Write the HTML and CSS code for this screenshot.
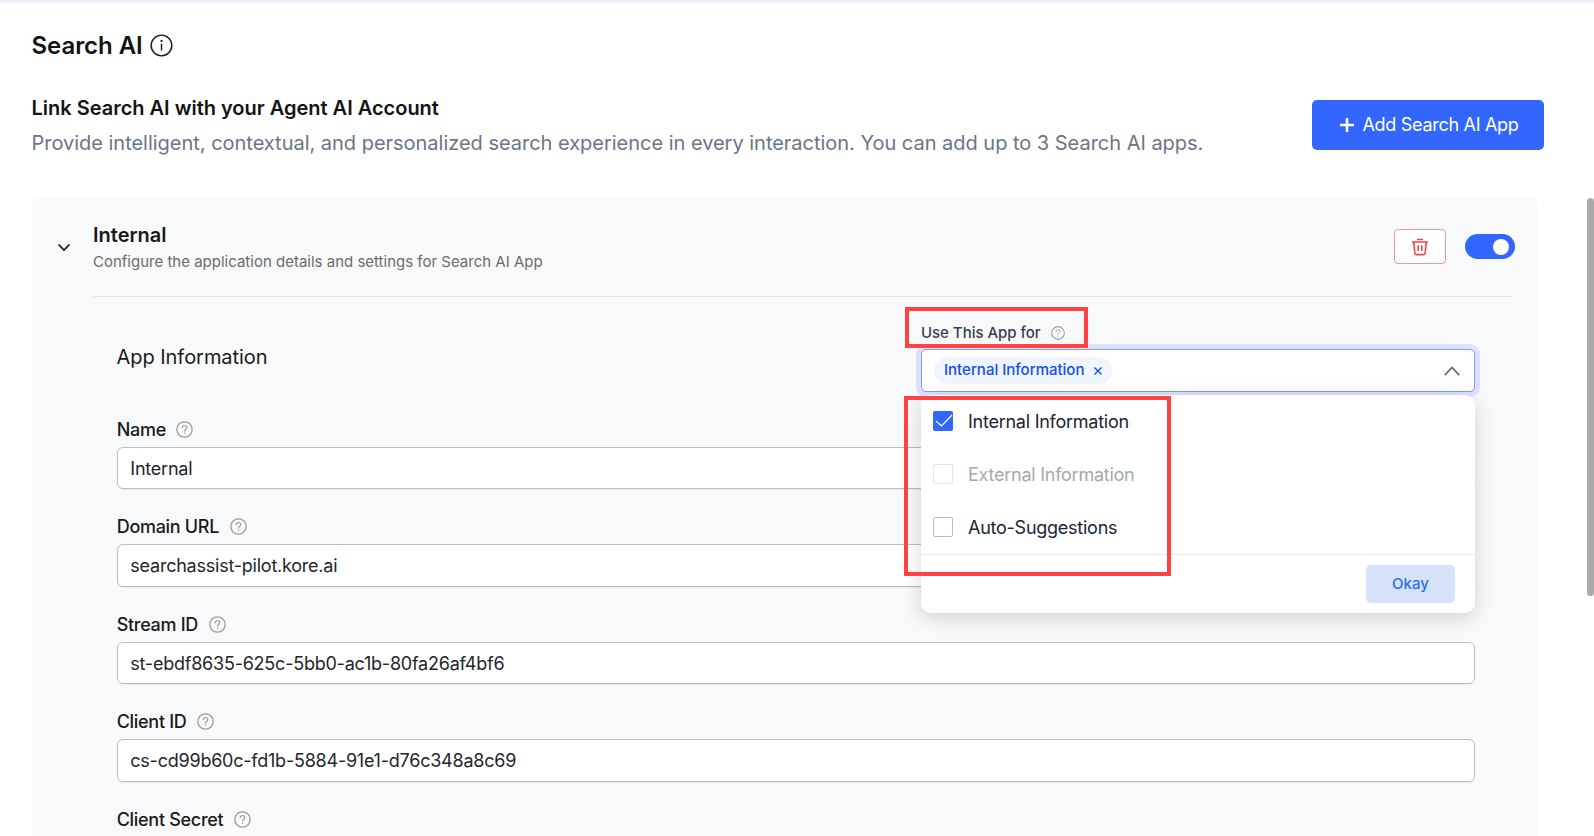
FILE: index.html
```html
<!DOCTYPE html>
<html lang="en">
<head>
<meta charset="utf-8">
<title>Search AI</title>
<link rel="stylesheet" href="styles.css">
</head>
<body>
<svg width="0" height="0" class="defs">
  <symbol id="help" viewBox="0 0 17 17">
    <circle cx="8.5" cy="8.5" r="7.7" fill="none" stroke="#9c9c9c" stroke-width="1.3"/>
    <path d="M6.2 6.7c0-1.3 1-2.2 2.3-2.2s2.3.9 2.3 2.1c0 1.6-2.2 1.7-2.2 3.4" fill="none" stroke="#9c9c9c" stroke-width="1.2" stroke-linecap="round"/>
    <circle cx="8.55" cy="12.2" r=".8" fill="#9c9c9c"/>
  </symbol>
</svg>
<div class="page">
  <h1 class="title"><span>Search AI</span>
    <svg class="info" viewBox="0 0 24 24"><circle cx="12" cy="12" r="10.8" fill="none" stroke="#1a1a1a" stroke-width="1.5"/><path d="M12 10.2v7" stroke="#1a1a1a" stroke-width="1.5"/><circle cx="12" cy="7.2" r="1.1" fill="#1a1a1a"/></svg>
  </h1>
  <header class="intro">
    <div class="intro-text">
      <h2 class="subtitle"><span>Link Search AI with your Agent AI Account</span></h2>
      <p class="lead"><span>Provide intelligent, contextual, and personalized search experience in every interaction. You can add up to 3 Search AI apps.</span></p>
    </div>
    <button class="add"><svg width="14" height="14" viewBox="0 0 14 14"><path d="M7 1v12M1 7h12" stroke="#fff" stroke-width="2.600" stroke-linecap="round"/></svg><span>Add Search AI App</span></button>
  </header>
  <main class="card">
    <div class="card-head">
      <svg class="toggle-arrow" width="14" height="9" viewBox="0 0 14 9"><path d="M1.5 1.5 7 7l5.500-5.500" fill="none" stroke="#16181d" stroke-width="1.7"/></svg>
      <div class="card-bar">
        <div class="card-names">
          <h3 class="card-title"><span>Internal</span></h3>
          <p class="card-desc"><span>Configure the application details and settings for Search AI App</span></p>
        </div>
        <button class="trash" aria-label="Delete"><svg width="18" height="18" viewBox="0 0 18 18" fill="none" stroke="#ef4444" stroke-width="1.600"><path d="M1 4h16M6 1.500h6M2.800 4l1 11c.1 1 .7 1.600 1.700 1.600h7c1 0 1.600-.6 1.700-1.600l1-11M7.200 7.300v5.700M10.800 7.300v5.700"/></svg></button>
        <span class="switch"><span class="knob"></span></span>
      </div>
    </div>
    <section class="form">
      <div class="form-top">
        <h4 class="section-title"><span>App Information</span></h4>
        <div class="use">
          <div class="use-label"><span>Use This App for</span><svg width="14" height="14"><use href="#help"/></svg></div>
          <div class="select">
            <span class="chip"><span>Internal Information</span><svg width="8" height="8" viewBox="0 0 8 8"><path d="M.5.500l7 7M7.500.500l-7 7" stroke="#0f4fea" stroke-width="1.400"/></svg></span>
            <svg class="caret" width="16" height="10" viewBox="0 0 16 10"><path d="M.8 9.200 8 1.500l7.200 7.700" fill="none" stroke="#5d6675" stroke-width="1.700"/></svg>
          </div>
          <div class="menu">
            <div class="option"><span class="box checked"><svg width="20" height="20" viewBox="0 0 20 20"><path d="M3 10l5.500 5L19 4" fill="none" stroke="#fff" stroke-width="1.200"/></svg></span><span>Internal Information</span></div>
            <div class="option disabled"><span class="box"></span><span>External Information</span></div>
            <div class="option"><span class="box"></span><span>Auto-Suggestions</span></div>
            <div class="menu-foot"><button class="okay"><span>Okay</span></button></div>
          </div>
          <div class="mark mark-label"></div>
          <div class="mark mark-menu"></div>
        </div>
      </div>
      <div class="field"><div class="label"><span>Name</span><svg width="17" height="17"><use href="#help"/></svg></div><div class="input"><span>Internal</span></div></div>
      <div class="field"><div class="label"><span>Domain URL</span><svg width="17" height="17"><use href="#help"/></svg></div><div class="input"><span>searchassist-pilot.kore.ai</span></div></div>
      <div class="field"><div class="label"><span>Stream ID</span><svg width="17" height="17"><use href="#help"/></svg></div><div class="input"><span>st-ebdf8635-625c-5bb0-ac1b-80fa26af4bf6</span></div></div>
      <div class="field"><div class="label"><span>Client ID</span><svg width="17" height="17"><use href="#help"/></svg></div><div class="input"><span>cs-cd99b60c-fd1b-5884-91e1-d76c348a8c69</span></div></div>
      <div class="field"><div class="label"><span>Client Secret</span><svg width="17" height="17"><use href="#help"/></svg></div><div class="input"></div></div>
    </section>
  </main>
</div>
<div class="scrollbar"></div>
</body>
</html>
```
FILE: styles.css
```css
* { box-sizing: border-box; margin: 0; }
body { font-family: Inter, "Liberation Sans", sans-serif; color: #1a1a1a; background: #fff; height: 836px; overflow: hidden; }
button { font: inherit; border: 0; padding: 0; }
svg { display: block; flex: none; }
.defs { position: absolute; }
.page { height: 836px; overflow: hidden; padding: 30px 50px 0 32px; background: linear-gradient(#e4edf4, #fff 5px); }
.title { display: flex; align-items: center; gap: 7px; height: 30px; font-size: 24px; font-weight: 600; line-height: 30px; letter-spacing: -.05px; color: #141414; }
.title span { margin: 2px 0 0 -.5px; }
.info { width: 23px; height: 23px; }
.intro { display: flex; justify-content: space-between; margin-top: 35px; height: 103px; }
.intro-text { margin-left: -.5px; }
.subtitle { font-size: 20px; line-height: 26px; font-weight: 600; letter-spacing: -.01px; color: #141414; }
.lead { font-size: 20px; line-height: 26px; margin-top: 9px; color: #6b7588; white-space: nowrap; letter-spacing: -.02px; }
.add { display: flex; align-items: center; justify-content: center; gap: 9px; width: 232px; height: 50px; margin-top: 5px; padding: 0 0 2px 2px; border-radius: 5px; background: #3366ff; color: #fff; font-size: 18px; letter-spacing: -.3px; }
.add svg { margin-top: 1px; }
.card { width: 1505px; height: 700px; border-radius: 5px; background: #f8f9fb; padding: 0 25px; }
.card-head { display: flex; align-items: center; gap: 22px; height: 99px; }
.toggle-arrow { margin-bottom: 1px; }
.card-bar { display: flex; align-items: center; flex: 1; height: 99px; border-bottom: 1px solid #e4e5e7; }
.card-names { flex: 1; padding-bottom: 1px; }
.card-title { font-size: 20px; line-height: 26px; font-weight: 600; }
.card-desc { font-size: 15px; line-height: 20px; margin-top: 4px; color: #6c6c6c; }
.trash { display: grid; place-items: center; width: 52px; height: 35px; padding-top: 1px; border: 1px solid #fb9494; border-radius: 4px; background: #fff; margin: 0 19px 2px 0; }
.switch { display: flex; align-items: center; justify-content: flex-end; width: 50px; height: 25px; border-radius: 13px; background: #3366ff; padding: 1px 6px 0 0; margin: 0 -3px 1.500px 0; }
.knob { width: 16px; height: 16px; border-radius: 50%; background: #fff; }
.form { padding: 0 37px 0 60px; }
.form-top { display: flex; justify-content: space-between; height: 118px; }
.section-title { font-size: 20px; line-height: 26px; font-weight: 400; margin: 47px 0 0 -.5px; letter-spacing: -.04px; }
.use { position: relative; width: 554px; padding-top: 25px; }
.use-label { display: flex; align-items: center; gap: 10px; height: 20px; font-size: 15px; font-weight: 500; color: #343e50; margin-bottom: 7px; }
.use-label svg { margin-top: 2px; }
.use-label span { letter-spacing: -.03px; }
.select { display: flex; align-items: center; justify-content: space-between; height: 43px; border: 1px solid #75a2f2; border-radius: 5px; background: #fff; box-shadow: 0 0 0 5px #e0dfff; padding: 0 14px 0 12px; }
.chip { display: flex; align-items: center; gap: 9.500px; height: 27px; padding: 0 10.500px 0 10px; border-radius: 14px; background: #eff4ff; color: #0f4fea; font-size: 15px; font-weight: 500; }
.chip span { padding-bottom: 2px; }
.menu { position: absolute; left: 0; top: 98px; width: 554px; height: 218px; background: #fff; border-radius: 10px; box-shadow: 0 5px 20px rgba(0,0,0,.16); }
.option { display: flex; align-items: center; gap: 15px; height: 53px; padding-left: 12px; font-size: 18px; letter-spacing: -.25px; color: #1b2333; }
.box { display: block; width: 20px; height: 20px; margin-bottom: 1.500px; border: 1px solid #bababf; border-radius: 2px; }
.checked { border: 0; background: #3366ff; }
.disabled { color: #a6a8b0; }
.disabled .box { border-color: #e2e3e6; }
.menu-foot { display: flex; justify-content: flex-end; height: 59px; border-top: 1px solid #e7e8ea; padding: 10px 20px; }
.okay { width: 89px; height: 38px; padding-bottom: 2px; border-radius: 5px; background: #d5e2fa; color: #2470ef; font-size: 15px; font-weight: 500; }
.mark { position: absolute; border: 4px solid #ff4242; }
.mark-label { left: -16px; top: 10px; width: 183px; height: 41px; }
.mark-menu { left: -17px; top: 99px; width: 267px; height: 180px; }
.field { height: 97.4px; }
.label { display: flex; align-items: center; gap: 10.500px; height: 29px; font-size: 18px; font-weight: 500; letter-spacing: -.3px; }
.label span { margin-left: -.3px; }
.input { display: flex; align-items: center; height: 42.400px; margin-top: 3px; padding-top: .5px; border: 1px solid #b9bdc2; border-radius: 6px; background: #fff; box-shadow: 0 1px 2px rgba(16,24,40,.06); padding-left: 12.300px; font-size: 18px; letter-spacing: -.23px; color: #23252b; }
.scrollbar { position: absolute; right: 0; top: 198px; width: 7px; height: 398px; border-radius: 4px; background: #a9a9a9; }
```
